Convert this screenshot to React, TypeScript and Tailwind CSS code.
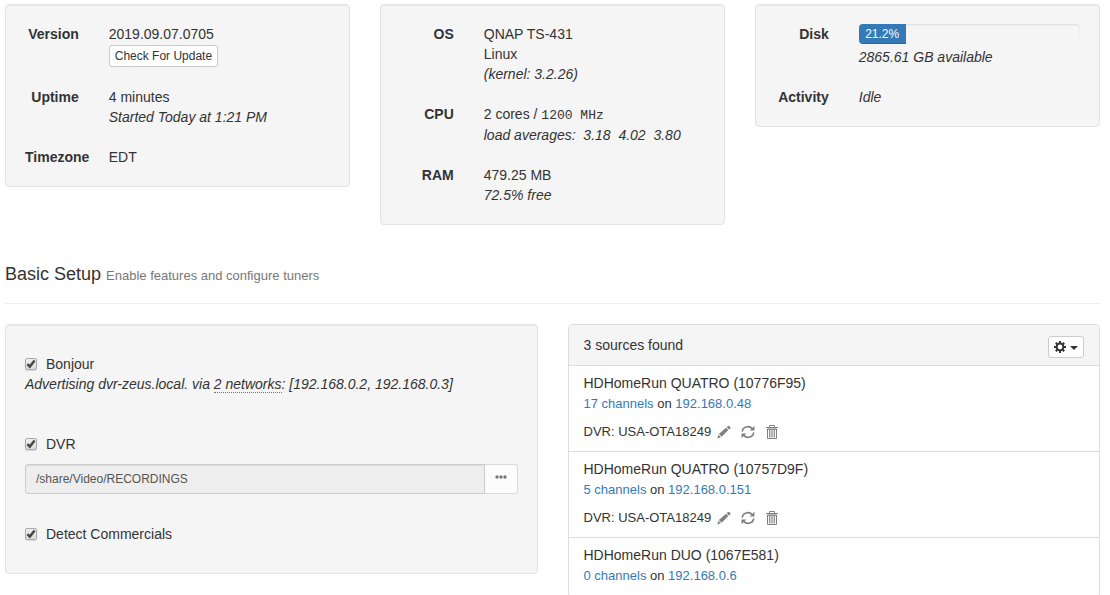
import { ReactNode, useState } from "react";

interface Source {
  name: string;
  channels: string;
  ip: string;
  dvr?: string;
}

const sources: Source[] = [
  { name: "HDHomeRun QUATRO (10776F95)", channels: "17 channels", ip: "192.168.0.48", dvr: "USA-OTA18249" },
  { name: "HDHomeRun QUATRO (10757D9F)", channels: "5 channels", ip: "192.168.0.151", dvr: "USA-OTA18249" },
  { name: "HDHomeRun DUO (1067E581)", channels: "0 channels", ip: "192.168.0.6" },
];

const diskUsed = 21.2;

/* Icons */

function PencilIcon() {
  return (
    <svg viewBox="0 0 14 14" className="size-[14px]" fill="currentColor" aria-hidden="true">
      <path d="M0.3 13.4 L1.4 9.8 L3.9 12.3 Z" />
      <path d="M1.9 9.1 L9 2.7 L11.4 5.1 L4.6 11.8 Z" />
      <path d="M9.7 2.1 L11 0.9 Q11.6 0.5 12.1 0.9 L13.4 2.2 Q13.8 2.8 13.4 3.2 L12 4.5 Z" />
    </svg>
  );
}

function RefreshIcon() {
  return (
    <svg viewBox="0 0 14 14" className="size-[14px]" fill="none" stroke="currentColor" strokeWidth="1.6" aria-hidden="true">
      <path d="M1.3 6.6 A5.6 5.2 0 0 1 11.2 3.6" />
      <path d="M12.7 7.4 A5.6 5.2 0 0 1 2.8 10.4" />
      <path d="M13.5 0.8 V5.6 H8.7 Z" fill="currentColor" stroke="none" />
      <path d="M0.5 13.2 V8.4 H5.3 Z" fill="currentColor" stroke="none" />
    </svg>
  );
}

function TrashIcon() {
  return (
    <svg viewBox="0 0 14 14" className="size-[14px]" fill="none" stroke="currentColor" aria-hidden="true">
      <path d="M4.5 2 V0.5 H9.5 V2" />
      <path d="M1 2.5 H13" />
      <path d="M2.5 4 V13.5 H11.5 V4 Z" />
      <path d="M4.5 5 V12.5 M6.2 5 V12.5 M7.9 5 V12.5 M9.6 5 V12.5" strokeWidth="0.9" />
      <path d="M2 4.4 H12" strokeWidth="0.8" />
    </svg>
  );
}

function CogIcon() {
  return (
    <svg viewBox="0 0 12 12" className="size-3" aria-hidden="true">
      <circle cx="6" cy="6" r="3.4" fill="none" stroke="currentColor" strokeWidth="2" />
      <path
        d="M6 0 V2.5 M6 9.5 V12 M0 6 H2.5 M9.5 6 H12 M1.8 1.8 L3.5 3.5 M8.5 8.5 L10.2 10.2 M10.2 1.8 L8.5 3.5 M3.5 8.5 L1.8 10.2"
        stroke="currentColor"
        strokeWidth="2"
      />
    </svg>
  );
}

function DotsIcon() {
  return (
    <svg viewBox="0 0 12 4" className="h-1 w-3" fill="currentColor" aria-hidden="true">
      <circle cx="2" cy="2" r="1.7" />
      <circle cx="6" cy="2" r="1.7" />
      <circle cx="10" cy="2" r="1.7" />
    </svg>
  );
}

/* Building blocks */

function Well({ children }: { children: ReactNode }) {
  return (
    <div className="rounded-sm border border-[#e3e3e3] bg-[#f5f5f5] p-[19px] shadow-[inset_0_1px_1px_rgba(0,0,0,0.05)]">
      {children}
    </div>
  );
}

function Row({ label, children }: { label: string; children: ReactNode }) {
  return (
    <div className="grid grid-cols-4 gap-x-[30px]">
      <dt className="text-right font-bold">{label}</dt>
      <dd className="col-span-3">{children}</dd>
    </div>
  );
}

function Check({ label }: { label: string }) {
  const [checked, setChecked] = useState(true);

  return (
    <label className="flex w-fit items-center gap-2">
      <span className="grid">
        <input
          type="checkbox"
          checked={checked}
          onChange={() => setChecked(!checked)}
          className="peer col-start-1 row-start-1 size-3 appearance-none rounded-xs border border-[#aaa] bg-linear-to-b from-[#eee] to-[#dcdcdc] shadow-[0_1px_1px_rgba(0,0,0,0.12)]"
        />
        <svg
          viewBox="0 0 12 12"
          className="pointer-events-none invisible col-start-1 row-start-1 size-3 peer-checked:visible"
          fill="none"
          stroke="#444"
          strokeWidth="2.4"
          aria-hidden="true"
        >
          <path d="M2.4 6.2 L4.8 8.6 L9.6 2.6" />
        </svg>
      </span>
      <span className="pl-px">{label}</span>
    </label>
  );
}

function SourceItem({ source }: { source: Source }) {
  return (
    <li className="border-b border-[#ddd] px-[15px] pt-[7px] pb-[9px]">
      <p>{source.name}</p>
      <p className="mt-px text-[13px]">
        <a href="#channels" className="text-[#337ab7]">{source.channels}</a> on{" "}
        <a href="#device" className="text-[#337ab7]">{source.ip}</a>
      </p>
      {source.dvr && (
        <div className="mt-2 flex items-center text-[13px]">
          <span>DVR: {source.dvr}</span>
          <div className="flex gap-[10px] pl-1.5 text-[#808080]">
            <button type="button" aria-label="Edit"><PencilIcon /></button>
            <button type="button" aria-label="Refresh"><RefreshIcon /></button>
            <button type="button" aria-label="Delete"><TrashIcon /></button>
          </div>
        </div>
      )}
    </li>
  );
}

export default function App() {
  return (
    <main className="h-screen overflow-hidden bg-white pt-1 pr-[10px] pl-[5px] font-['Liberation_Sans',Arial,sans-serif] text-[14px] leading-5 text-[#333]">
      {/* Status */}
      <section className="grid grid-cols-3 items-start gap-[30px]">
        <Well>
          <dl className="space-y-5">
            <Row label="Version">
              2019.09.07.0705
              <button type="button" className="mt-px block rounded-[3px] border border-[#ccc] bg-white px-[5px] py-px text-[12px] leading-[18px]">
                Check For Update
              </button>
            </Row>
            <Row label="Uptime">
              4 minutes
              <em className="block">Started Today at 1:21 PM</em>
            </Row>
            <Row label="Timezone">EDT</Row>
          </dl>
        </Well>

        <Well>
          <dl className="space-y-5">
            <Row label="OS">
              QNAP TS-431
              <span className="block">Linux</span>
              <em className="block">(kernel: 3.2.26)</em>
            </Row>
            <Row label="CPU">
              2 cores / <span className="font-['Liberation_Mono',monospace] text-[13px] leading-[18px]">1200 MHz</span>
              <em className="block whitespace-pre">load averages:  3.18  4.02  3.80</em>
            </Row>
            <Row label="RAM">
              479.25 MB
              <em className="block">72.5% free</em>
            </Row>
          </dl>
        </Well>

        <Well>
          <dl className="space-y-5">
            <Row label="Disk">
              <div className="mb-[3px] h-5 overflow-hidden rounded-sm bg-[#f5f5f5] shadow-[inset_0_1px_2px_rgba(0,0,0,0.1)]">
                <div
                  className="h-full bg-[#337ab7] text-center text-[12px] text-white shadow-[inset_0_-1px_0_rgba(0,0,0,0.15)]"
                  style={{ width: `${diskUsed}%` }}
                >
                  {diskUsed}%
                </div>
              </div>
              <em className="block">2865.61 GB available</em>
            </Row>
            <Row label="Activity">
              <em>Idle</em>
            </Row>
          </dl>
        </Well>
      </section>

      {/* Basic setup */}
      <header className="mt-[39px] mb-5 border-b border-[#eee] pb-[19px]">
        <h4 className="text-[18px] leading-5">
          Basic Setup <small className="text-[13px] leading-none text-[#777]">Enable features and configure tuners</small>
        </h4>
      </header>

      <section className="grid grid-cols-2 items-start gap-[30px]">
        <Well>
          <div className="py-[10px]">
            <Check label="Bonjour" />
            <em>
              Advertising dvr-zeus.local. via{" "}
              <abbr title="192.168.0.2, 192.168.0.3" className="border-b border-dotted border-[#777] no-underline">2 networks</abbr>
              : [192.168.0.2, 192.168.0.3]
            </em>
          </div>
          <div className="mt-[30px]">
            <Check label="DVR" />
            <div className="mt-[10px] flex h-[30px] text-[12px]">
              <input
                type="text"
                readOnly
                aria-label="Recordings path"
                defaultValue="/share/Video/RECORDINGS"
                className="min-w-0 flex-1 rounded-l-[3px] border border-[#ccc] bg-[#eee] px-[10px] text-[#555] shadow-[inset_0_1px_1px_rgba(0,0,0,0.075)]"
              />
              <button
                type="button"
                aria-label="Browse"
                className="flex w-[33px] items-center justify-center rounded-r-[3px] border border-l-0 border-[#dadada] bg-[#fcfcfc] pb-1 text-[#777]"
              >
                <DotsIcon />
              </button>
            </div>
          </div>
          <div className="mt-[30px] pb-[10px]">
            <Check label="Detect Commercials" />
          </div>
        </Well>

        <div className="rounded-sm border border-[#ddd] bg-white">
          <div className="flex items-start justify-between rounded-t-[3px] border-b border-[#ddd] bg-[#f5f5f5] px-[15px]">
            <h3 className="py-[10px]">3 sources found</h3>
            <button
              type="button"
              aria-label="Source options"
              className="mt-[11px] flex h-[22px] items-center gap-1 rounded-[3px] border border-[#ccc] bg-white px-[5px]"
            >
              <CogIcon />
              <svg viewBox="0 0 8 4" className="mt-px h-1 w-2" fill="currentColor" aria-hidden="true">
                <path d="M0 0 H8 L4 4 Z" />
              </svg>
            </button>
          </div>
          <ul>
            {sources.map((source) => (
              <SourceItem key={source.name} source={source} />
            ))}
          </ul>
        </div>
      </section>
    </main>
  );
}
